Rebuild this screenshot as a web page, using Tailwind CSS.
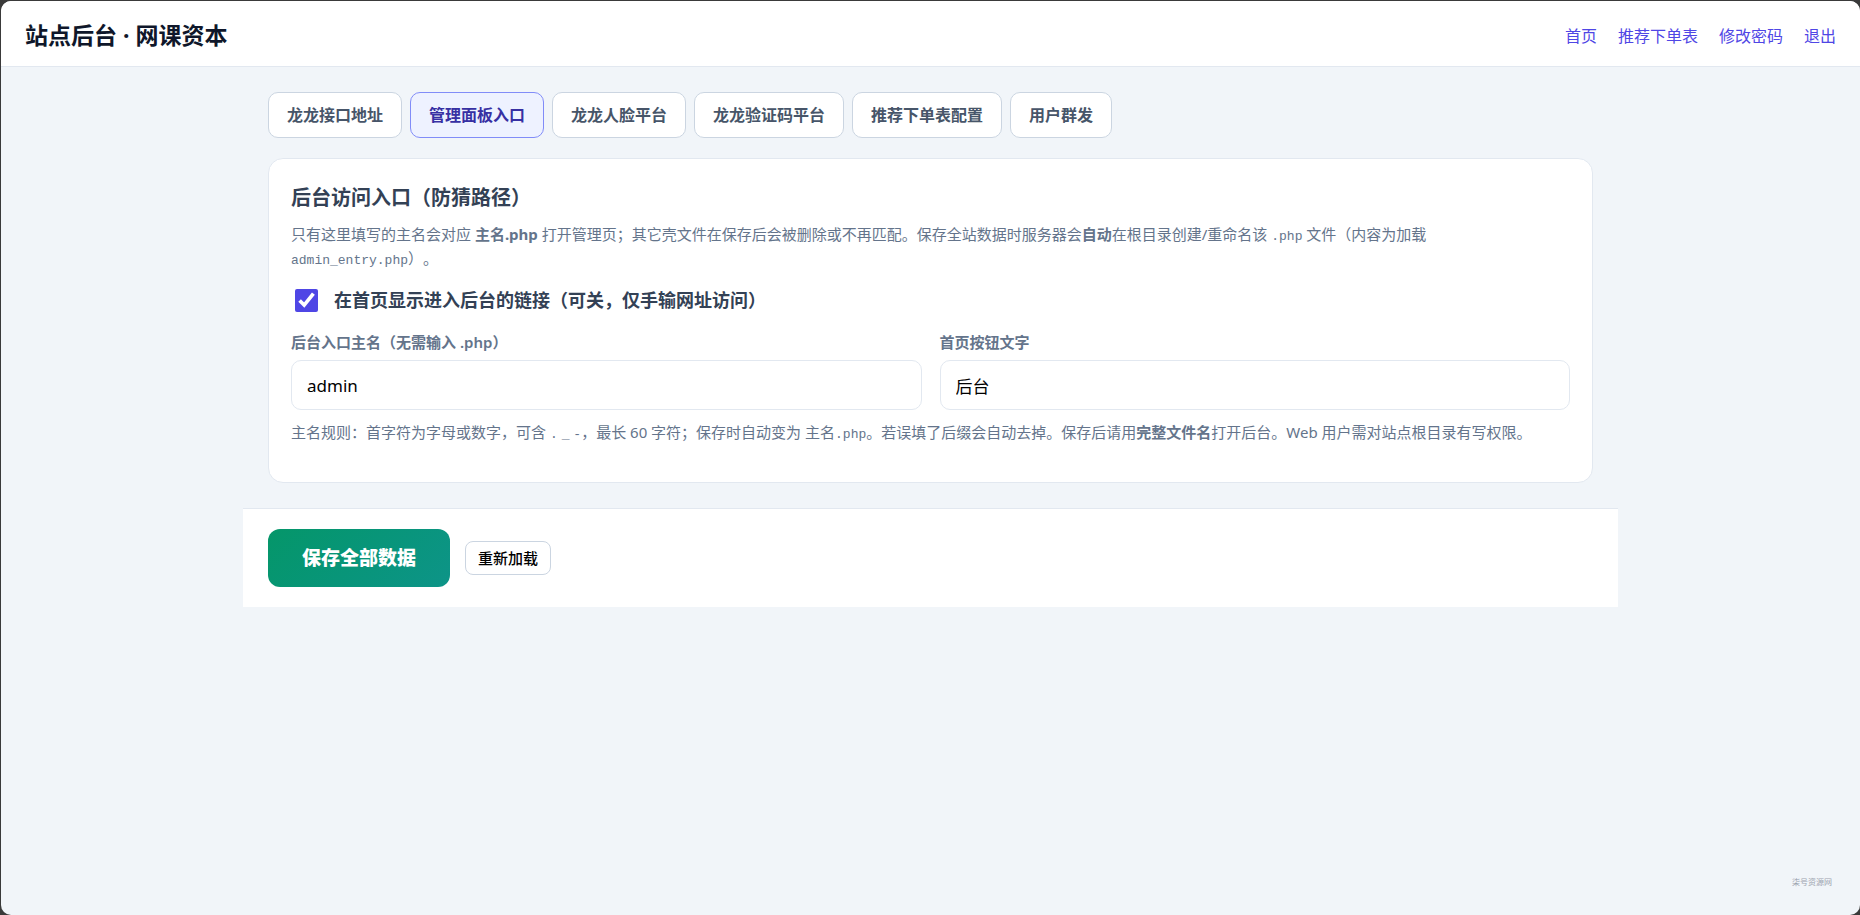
<!DOCTYPE html>
<html lang="zh-CN">
<head>
    <meta charset="UTF-8">
    <meta name="viewport" content="width=device-width, initial-scale=1.0">
    <title>站点后台 · 网课资本</title>
    <script src="https://cdn.jsdelivr.net/npm/@tailwindcss/browser@4"></script>
</head>
<body class="bg-[#3a3a3a] pt-px pl-px font-['Noto_Sans','Noto_Sans_CJK_SC',sans-serif] [text-spacing-trim:space-all]">
    <div class="flex min-h-[calc(100vh-1px)] flex-col overflow-hidden rounded-[10px] bg-[#f1f5f9] text-[#1e293b]">

        <!-- 顶部导航 -->
        <header class="flex h-[66px] items-center justify-between border-b border-[#e2e8f0] bg-white px-6 pt-1">
            <h1 class="text-[23px] font-bold text-[#0f172a]">站点后台 · 网课资本</h1>
            <nav class="flex gap-[21px] text-base text-[#4f46e5]">
                <a href="#">首页</a>
                <a href="#">推荐下单表</a>
                <a href="#">修改密码</a>
                <a href="#">退出</a>
            </nav>
        </header>

        <main class="mx-auto w-full max-w-[1375px]">
            <div class="px-[25px] pt-[25px]">
                <!-- 标签页 -->
                <div class="mb-5 flex flex-wrap gap-2 text-base font-semibold leading-6 text-[#475569]">
                    <button type="button" class="rounded-[10px] border border-[#cbd5e1] bg-white px-[18px] py-[10px]">龙龙接口地址</button>
                    <button type="button" class="rounded-[10px] border border-[#818cf8] bg-[#eef2ff] px-[18px] py-[10px] text-[#3730a3]">管理面板入口</button>
                    <button type="button" class="rounded-[10px] border border-[#cbd5e1] bg-white px-[18px] py-[10px]">龙龙人脸平台</button>
                    <button type="button" class="rounded-[10px] border border-[#cbd5e1] bg-white px-[18px] py-[10px]">龙龙验证码平台</button>
                    <button type="button" class="rounded-[10px] border border-[#cbd5e1] bg-white px-[18px] py-[10px]">推荐下单表配置</button>
                    <button type="button" class="rounded-[10px] border border-[#cbd5e1] bg-white px-[18px] py-[10px]">用户群发</button>
                </div>

                <!-- 后台入口设置 -->
                <section class="rounded-[15px] border border-[#e2e8f0] bg-white px-[22px] pt-[25px] pb-[38px]">
                    <h2 class="mb-[10px] text-xl leading-7 font-bold text-[#334155]">后台访问入口（防猜路径）</h2>
                    <p class="mb-4 text-[15px] leading-6 text-[#64748b]">只有这里填写的主名会对应 <strong>主名.php</strong> 打开管理页；其它壳文件在保存后会被删除或不再匹配。保存全站数据时服务器会<strong>自动</strong>在根目录创建/重命名该 <code class="font-['Liberation_Mono',monospace] text-[13px] leading-none">.php</code> 文件（内容为加载 <code class="font-['Liberation_Mono',monospace] text-[13px] leading-none">admin_entry.php</code>）。</p>

                    <label class="mb-4 flex items-center gap-4 pl-1 text-lg leading-7 font-semibold text-[#334155]">
                        <input type="checkbox" checked class="size-[23px] accent-[#4f46e5]">
                        在首页显示进入后台的链接（可关，仅手输网址访问）
                    </label>

                    <div class="grid grid-cols-2 gap-[18px]">
                        <div>
                            <label for="entryName" class="mb-[6px] block text-[15px] leading-6 font-semibold text-[#64748b]">后台入口主名（无需输入 .php）</label>
                            <input id="entryName" type="text" value="admin" class="h-[50px] w-full rounded-[10px] border border-[#e2e8f0] bg-white px-[15px] text-[17px] text-black">
                        </div>
                        <div>
                            <label for="entryText" class="mb-[6px] block text-[15px] leading-6 font-semibold text-[#64748b]">首页按钮文字</label>
                            <input id="entryText" type="text" value="后台" class="h-[50px] w-full rounded-[10px] border border-[#e2e8f0] bg-white px-[15px] text-[17px] text-black">
                        </div>
                    </div>
                    <p class="mt-[10px] text-[15px] leading-6 text-[#64748b]">主名规则：首字符为字母或数字，可含 <code class="font-['Liberation_Mono',monospace] text-[13px] leading-none">.</code> <code class="font-['Liberation_Mono',monospace] text-[13px] leading-none">_</code> <code class="font-['Liberation_Mono',monospace] text-[13px] leading-none">-</code>，最长 60 字符；保存时自动变为 <code class="font-['Liberation_Mono','Noto_Sans_CJK_SC',monospace] text-[15px] leading-none">主名<span class="text-[13px]">.php</span></code>。若误填了后缀会自动去掉。保存后请用<strong>完整文件名</strong>打开后台。Web 用户需对站点根目录有写权限。</p>
                </section>
            </div>

            <!-- 底部操作栏 -->
            <div class="mt-[25px] flex items-center gap-[15px] border-t border-[#e2e8f0] bg-white px-[25px] py-5">
                <button type="button" class="rounded-xl bg-linear-135 from-[#059669] to-[#0d9488] px-[34px] py-[15px] text-[19px] leading-7 font-extrabold text-white">保存全部数据</button>
                <button type="button" class="rounded-lg border border-[#cbd5e1] bg-white px-3 py-1 text-[15px] leading-6 font-medium text-black">重新加载</button>
            </div>
        </main>

        <footer class="mt-auto px-7 pb-[27px] text-right text-[8px] leading-3 text-[#9ca3af]">柒号资源网</footer>
    </div>
</body>
</html>
